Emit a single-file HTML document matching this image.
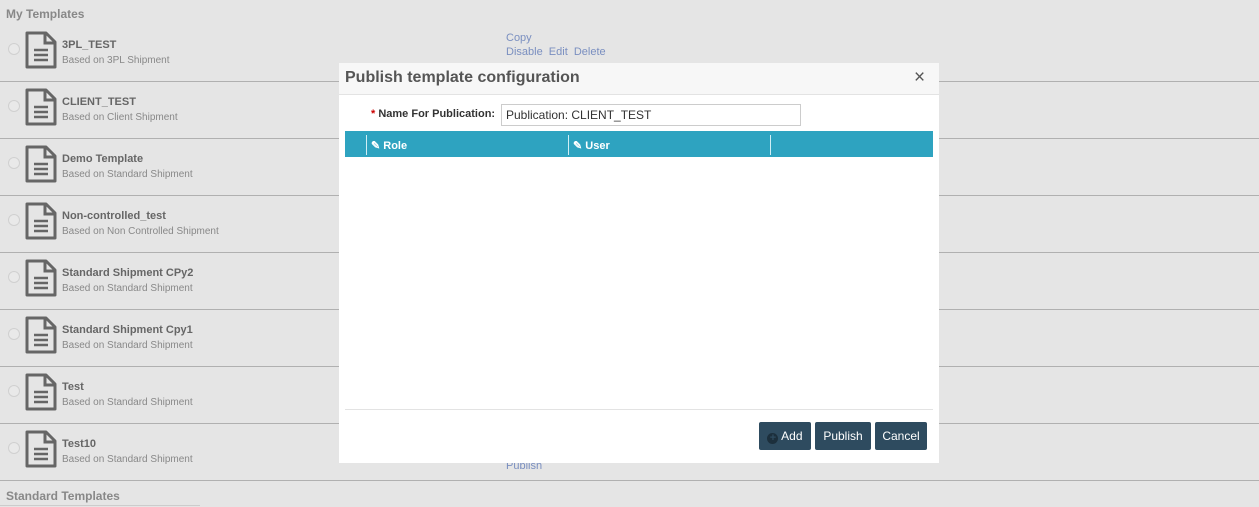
<!DOCTYPE html><html><head><style>
body{margin:0;width:1259px;height:507px;background:#e5e5e5;font-family:"Liberation Sans",sans-serif;position:relative;overflow:hidden}
.a{position:absolute}
.sec{font-size:12px;font-weight:bold;color:#888;left:6px}
.row{left:0;width:1259px;height:57px;border-bottom:1px solid #b0b0b0}
.rad{left:8px;top:19px;width:10px;height:10px;border:1px solid #d0d0d0;border-radius:50%;background:#e9e9e9}
.t{left:62px;top:15px;font-size:11px;font-weight:bold;color:#666}
.s{left:62px;top:31px;font-size:10px;color:#888}
.lnk{font-size:11px;color:#7a8fc0}
.btn{background:#2e4b5f;color:#fff;font-size:12px;border-radius:2px;height:28px;line-height:29px;text-align:center;top:422px}
</style></head><body>
<div class="a sec" style="top:7px">My Templates</div>
<div id="rows"></div>
<div class="a lnk" style="left:506px;top:32px">Copy</div>
<div class="a lnk" style="left:506px;top:46px">Disable&nbsp; Edit&nbsp; Delete</div>
<div class="a lnk" style="left:506px;top:460px">Publish</div>
<div class="a sec" style="top:489px">Standard Templates</div>
<div class="a" style="left:0;top:505px;width:200px;border-top:1px solid #ccc"></div>
<script>
var d=[["3PL_TEST","3PL Shipment"],["CLIENT_TEST","Client Shipment"],["Demo Template","Standard Shipment"],["Non-controlled_test","Non Controlled Shipment"],["Standard Shipment CPy2","Standard Shipment"],["Standard Shipment Cpy1","Standard Shipment"],["Test","Standard Shipment"],["Test10","Standard Shipment"]];
var h="";d.forEach(function(r,i){h+='<div class="a row" style="top:'+(24+57*i)+'px"><div class="a rad"></div><svg class="a" style="left:25px;top:7px" width="32" height="38" viewBox="0 0 32 38"><path d="M2 2H21L30 11V36H2Z" fill="none" stroke="#666" stroke-width="3" stroke-linejoin="round"/><path d="M20 2V12H30" fill="none" stroke="#666" stroke-width="3"/><path d="M9 19H23M9 24H23M9 29H23" stroke="#666" stroke-width="2.5"/></svg><div class="a t">'+r[0]+'</div><div class="a s">Based on '+r[1]+'</div></div>'});
document.getElementById("rows").innerHTML=h;
</script>
<div class="a" style="left:339px;top:63px;width:600px;height:400px;background:#fff">
<div class="a" style="left:0;top:0;width:600px;height:31px;background:#f7f7f7;border-bottom:1px solid #e3e3e3"></div>
<div class="a" style="left:6px;top:6px;font-size:16px;font-weight:bold;color:#555">Publish template configuration</div>
<div class="a" style="left:575px;top:4px;font-size:19px;color:#555">×</div>
<div class="a" style="left:32px;top:45px;font-size:11px;font-weight:bold;color:#333"><span style="color:#c00">*</span> Name For Publication:</div>
<div class="a" style="left:162px;top:41px;width:294px;height:20px;border:1px solid #ccc;font-size:12px;line-height:21px;padding-left:4px;color:#333">Publication: CLIENT_TEST</div>
<div class="a" style="left:6px;top:68px;width:588px;height:26px;background:#2ea3c0"></div>
<div class="a" style="left:27px;top:72px;height:20px;border-left:1px solid #d0eef5"></div>
<div class="a" style="left:229px;top:72px;height:20px;border-left:1px solid #d0eef5"></div>
<div class="a" style="left:431px;top:72px;height:20px;border-left:1px solid #d0eef5"></div>
<div class="a" style="left:32px;top:76px;font-size:11px;font-weight:bold;color:#fff">✎ Role</div>
<div class="a" style="left:234px;top:76px;font-size:11px;font-weight:bold;color:#fff">✎ User</div>
<div class="a" style="left:6px;top:346px;width:588px;border-top:1px solid #e3e3e3"></div>
</div>
<div class="a btn" style="left:759px;width:52px"><span style="display:inline-block;width:11px;height:11px;border-radius:50%;background:#1c2f3c;vertical-align:-1px;color:#2e4b5f;font-size:11px;line-height:11px;font-weight:bold">+</span> Add</div>
<div class="a btn" style="left:815px;width:56px">Publish</div>
<div class="a btn" style="left:875px;width:52px">Cancel</div>
</body></html>
